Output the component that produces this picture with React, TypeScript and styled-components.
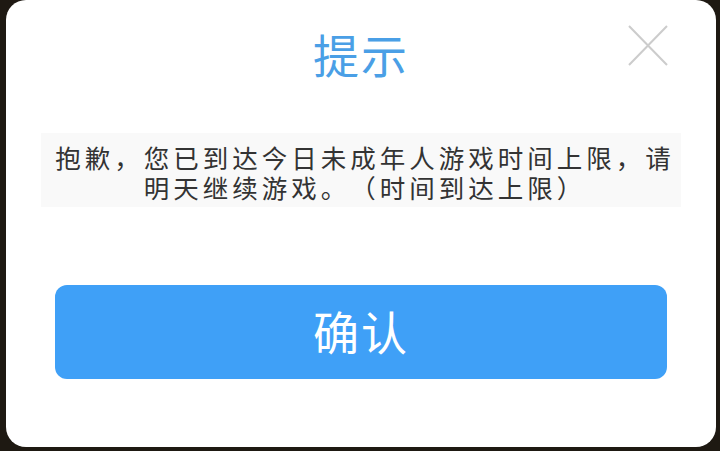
import React from 'react';
import styled, { createGlobalStyle } from 'styled-components';

const GlobalStyle = createGlobalStyle`
  html, body {
    margin: 0;
    padding: 0;
    background: #1e1912;
    font-family: "Noto Sans CJK SC", "Noto Sans", sans-serif;
  }
`;

const Screen = styled.div`
  width: 720px;
  height: 451px;
  padding: 0 4px 4px 6px;
  box-sizing: border-box;
  background: #1e1912;
`;

const Dialog = styled.div`
  position: relative;
  height: 447px;
  background: #ffffff;
  border-radius: 20px;
  display: flex;
  flex-direction: column;
  align-items: center;
`;

const Header = styled.div`
  height: 105px;
  width: 100%;
  display: flex;
  align-items: center;
  justify-content: center;
`;

const Title = styled.h1`
  margin: 0;
  font-size: 46px;
  font-weight: 400;
  line-height: 1;
  color: #4a9fe6;
  letter-spacing: 2px;
`;

const CloseButton = styled.button`
  position: absolute;
  top: 25px;
  right: 48px;
  width: 40px;
  height: 41px;
  padding: 0;
  border: none;
  background: transparent;
  cursor: pointer;
`;

const Message = styled.div`
  margin-top: 28px;
  width: 640px;
  box-sizing: border-box;
  padding: 9px 0 5px 8px;
  background: #f9f9f9;
  text-align: center;
  font-size: 25.5px;
  line-height: 30px;
  letter-spacing: 4px;
  text-spacing-trim: space-all;
  color: #333333;
`;

const ConfirmButton = styled.button`
  margin-top: 78px;
  width: 612px;
  height: 94px;
  padding: 0 0 5px;
  border: none;
  border-radius: 12px;
  background: #3fa0f7;
  color: #ffffff;
  font-family: inherit;
  font-size: 46px;
  line-height: 1;
  letter-spacing: 2px;
  cursor: pointer;
`;

const CloseIcon = () => (
  <svg width="40" height="41" viewBox="0 0 40 41">
    <path d="M1 1 L39 40 M39 1 L1 40" stroke="#cccccc" strokeWidth="2" fill="none" />
  </svg>
);

export default function App() {
  return (
    <>
      <GlobalStyle />
      <Screen>
        <Dialog>
          <Header>
            <Title>提示</Title>
          </Header>
          <CloseButton aria-label="关闭">
            <CloseIcon />
          </CloseButton>
          <Message>抱歉，您已到达今日未成年人游戏时间上限，请明天继续游戏。（时间到达上限）</Message>
          <ConfirmButton>确认</ConfirmButton>
        </Dialog>
      </Screen>
    </>
  );
}
